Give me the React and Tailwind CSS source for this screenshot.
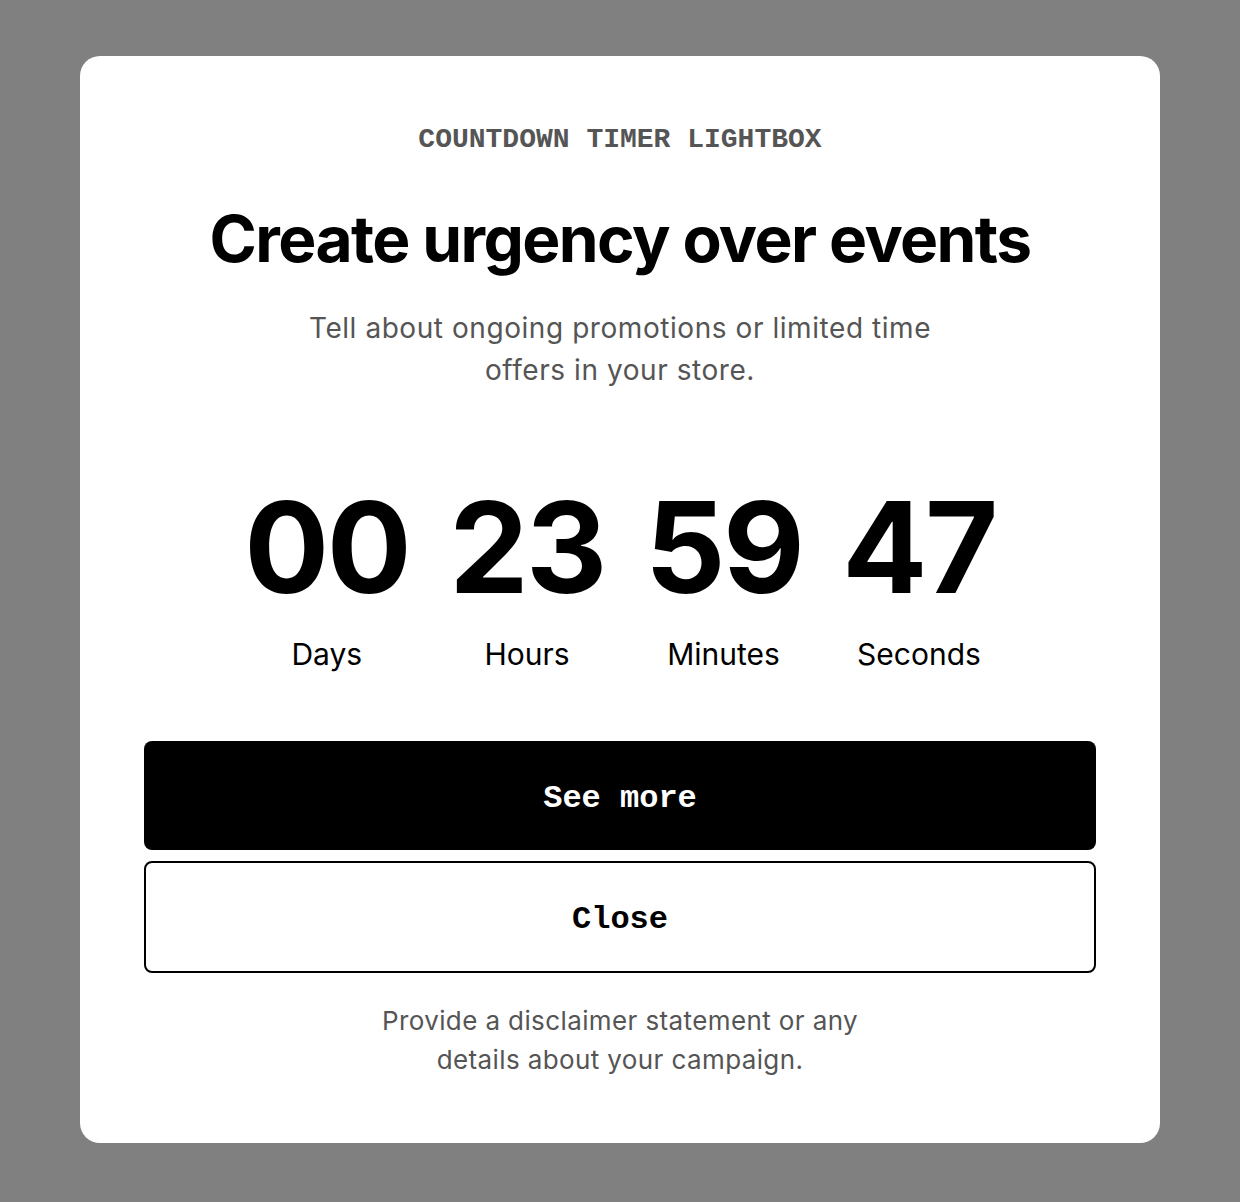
const units = [
  { value: '00', label: 'Days' },
  { value: '23', label: 'Hours' },
  { value: '59', label: 'Minutes' },
  { value: '47', label: 'Seconds' },
];

const mono = { fontFamily: '"Liberation Mono", "DejaVu Sans Mono", monospace' };

const App = () => {
  return (
    <div className="min-h-screen bg-[#808080] pt-[56px] pb-[60px]">
      <div className="mx-auto w-[1080px] rounded-[20px] bg-white px-16 pt-[66px] pb-16 flex flex-col items-center text-center font-['Inter',sans-serif]">
        <p
          className="text-[28px] leading-[36px] font-bold text-[#555555] uppercase"
          style={mono}
        >
          Countdown Timer Lightbox
        </p>
        <h1 className="mt-[43px] text-[64px] leading-[76px] font-bold tracking-[-0.025em] text-black">
          Create urgency over events
        </h1>
        <p className="mt-[30px] max-w-[680px] text-[28px] leading-[42px] tracking-[0.02em] text-[#555555]">
          Tell about ongoing promotions or limited time offers in your store.
        </p>

        {/* countdown: value over unit label */}
        <div className="mt-[96px] flex items-start justify-center gap-[40px]">
          {units.map((u) => (
            <div key={u.label} className="flex flex-col items-center">
              <span className="text-[126px] leading-[120px] font-bold tracking-[-0.02em] text-black">
                {u.value}
              </span>
              <span className="mt-[29px] text-[30px] leading-[36px] text-black">
                {u.label}
              </span>
            </div>
          ))}
        </div>

        <div className="mt-[69px] w-full flex flex-col gap-[11px]">
          <button
            className="h-[109px] w-full rounded-[8px] bg-black pt-[6px] text-white text-[32px] font-bold"
            style={mono}
          >
            See more
          </button>
          <button
            className="h-[112px] w-full rounded-[8px] border-2 border-black bg-white pt-[6px] text-black text-[32px] font-bold"
            style={mono}
          >
            Close
          </button>
        </div>

        <p className="mt-[28px] max-w-[520px] text-[26px] leading-[39px] tracking-[0.015em] text-[#555555]">
          Provide a disclaimer statement or any details about your campaign.
        </p>
      </div>
    </div>
  );
};

export default App;
